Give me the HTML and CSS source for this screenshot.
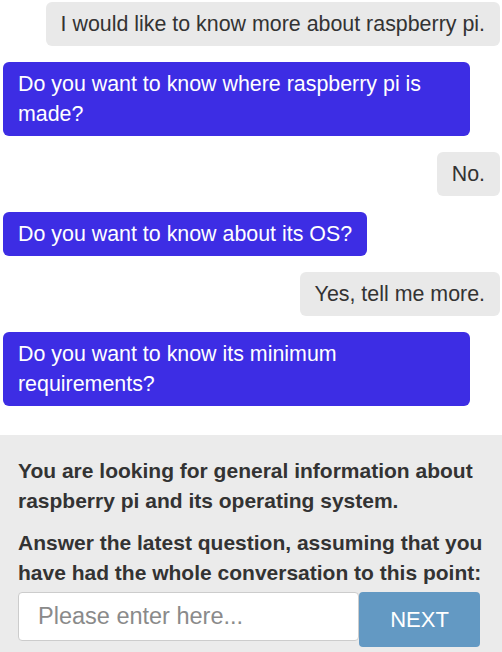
FILE: index.html
```html
<!DOCTYPE html>
<html lang="en">
<head>
    <meta charset="UTF-8">
    <meta name="viewport" content="width=device-width, initial-scale=1.0">
    <title>Chat</title>
    <link rel="stylesheet" href="styles.css">
</head>
<body>
    <div class="chat">
        <div class="msg user"><div class="bubble">I would like to know more about raspberry pi.</div></div>
        <div class="msg bot"><div class="bubble">Do you want to know where raspberry pi is made?</div></div>
        <div class="msg user"><div class="bubble">No.</div></div>
        <div class="msg bot"><div class="bubble">Do you want to know about its OS?</div></div>
        <div class="msg user"><div class="bubble">Yes, tell me more.</div></div>
        <div class="msg bot"><div class="bubble">Do you want to know its minimum requirements?</div></div>
    </div>
    <div class="panel">
        <p class="info">You are looking for general information about raspberry pi and its operating system.</p>
        <p class="info second">Answer the latest question, assuming that you have had the whole conversation to this point:</p>
        <div class="answer">
            <input type="text" class="answer-input" placeholder="Please enter here...">
            <button class="next">NEXT</button>
        </div>
    </div>
</body>
</html>
```

FILE: styles.css
```css
body {
    margin: 0;
    font-family: "Liberation Sans", Arial, sans-serif;
    background: white;
}
.chat {
    padding: 2px 2px 13px 3px;
}
.msg {
    display: flex;
    margin-bottom: 16px;
}
.msg.user {
    justify-content: flex-end;
}
.bubble {
    font-size: 21.4px;
    line-height: 30px;
    padding: 7px 15px;
    border-radius: 6px;
    max-width: 437px;
}
.user .bubble {
    background: #e9e9e9;
    color: #333;
}
.bot .bubble {
    background: #3d2de4;
    color: white;
}
.panel {
    background: #ebebeb;
    padding: 21px 18px 20px 18px;
}
.info {
    margin: 0;
    font-size: 21px;
    line-height: 30px;
    font-weight: bold;
    color: #333;
}
.info.second {
    margin-top: 12px;
}
.answer {
    display: flex;
    align-items: flex-start;
    margin-top: 4px;
}
.answer-input {
    width: 341px;
    height: 49px;
    box-sizing: border-box;
    border: 1px solid #ccc;
    border-radius: 4px;
    padding: 0 19px;
    font-family: "Liberation Sans", Arial, sans-serif;
    font-size: 23.5px;
    color: #333;
    background: white;
}
.answer-input::placeholder {
    color: #8a8a8a;
}
.next {
    width: 121px;
    height: 55px;
    border: none;
    border-radius: 4px;
    background: #6399c3;
    color: white;
    font-family: "Liberation Sans", Arial, sans-serif;
    font-size: 22px;
    padding: 0;
    cursor: pointer;
}
```
